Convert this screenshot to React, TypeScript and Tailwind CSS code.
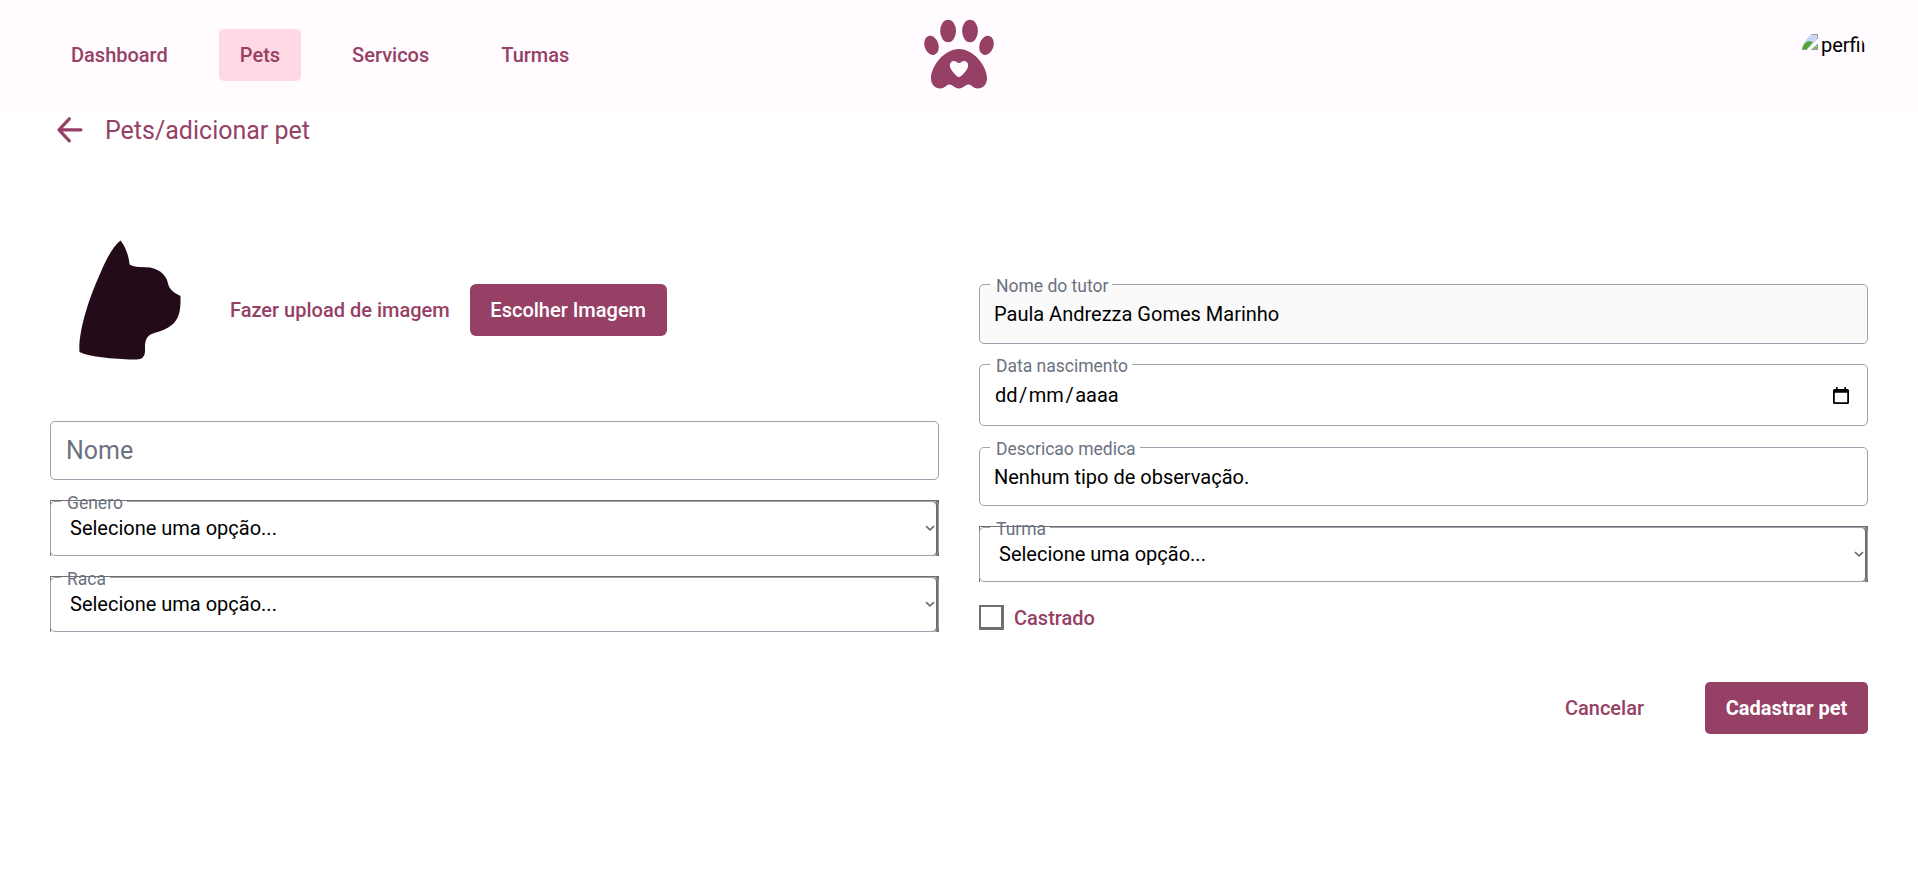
import React from "react";

const navItems = ["Dashboard", "Pets", "Servicos", "Turmas"];

function Paw() {
  return (
    <svg className="ml-px h-[76px] w-[80px]" viewBox="0 0 80 76" fill="#964066">
      <ellipse cx="28.1" cy="14" rx="7.9" ry="11.2" />
      <ellipse cx="50" cy="14" rx="7.9" ry="11.2" />
      <ellipse cx="11.5" cy="28.4" rx="7" ry="9.8" transform="rotate(-18 11.5 28.4)" />
      <ellipse cx="66.5" cy="28.4" rx="7" ry="9.8" transform="rotate(18 66.5 28.4)" />
      <path
        fillRule="evenodd"
        d="M39 32C24 32 11 49.500 11 61.200C11 67.500 15 71.400 20.500 71.400C25.500 71.400 26 67.600 29.400 67.600C33 67.600 34 71.400 39 71.400C44 71.400 45 67.600 48.600 67.600C52 67.600 52.500 71.400 57.500 71.400C63 71.400 67 67.500 67 61.200C67 49.500 54 32 39 32ZM39 60.200C37 60.200 29.800 52.500 29.800 48.500C29.800 45.500 31.700 43.900 34 43.900C36.200 43.900 37 46 39 46C41 46 41.800 43.900 44 43.900C46.300 43.900 48.200 45.500 48.200 48.500C48.200 52.500 41 60.200 39 60.200Z"
      />
    </svg>
  );
}

function Header() {
  return (
    <header className="grid h-[110px] grid-cols-[1fr_80px_1fr] items-center bg-[#fffbff] px-[50px]">
      <nav className="flex gap-[30px]">
        {navItems.map((item) => (
          <a
            key={item}
            className={
              item === "Pets"
                ? "flex h-[52px] items-center rounded-[5px] bg-[#ffd9e3] px-[21px]"
                : "flex h-[52px] items-center px-[21px]"
            }
          >
            {item}
          </a>
        ))}
      </nav>
      <Paw />
      <div className="mt-[25px] flex size-[68px] items-start self-start justify-self-end pt-[7px] pl-[2px] [clip-path:circle(50%)]">
        <BrokenImage />
        <span className="ml-[3px] text-[20px] leading-[26px] font-normal text-black">perfil</span>
      </div>
    </header>
  );
}

function BrokenImage() {
  return (
    <svg className="mt-[2px] size-4 shrink-0" viewBox="0 0 16 16">
      <path d="M0 0h16v16H0z" fill="#c6d7f7" />
      <path d="M0 15.500C2 8 6 6 11 8L5 16H0z" fill="#52a535" />
      <path d="M8 16l8-6v6z" fill="#7db865" />
      <path d="M4 16L16 5v4L8.500 16z" fill="#fff" />
      <path d="M10 .5h5.500V5M15.500 10v6M0 15.500h5M9 15.500h7" fill="none" stroke="#9a9a9a" />
    </svg>
  );
}

function Cat() {
  return (
    <svg className="h-[120px] w-[102px]" viewBox="0 0 102 120" fill="#230b1a">
      <path d="M41.500 .5C46.500 6 50 17 50.500 24Q51.500 27 67 27.200C78 27.200 87.500 34 89 43.500C90 49 95 53 101.500 56C102 76 98.500 84 83 90.500C76 93.500 66.500 92.500 66 106V112Q65.500 119.500 57.500 119.500C40 119.500 12 117.500 .5 112C-1 95 8 64 17.500 42C25 24.500 31.500 8.500 41.500 .5Z" />
    </svg>
  );
}

const legend = "h-0 pl-[6px] pr-[4px] text-[17.5px] leading-[2px] font-normal text-[#6b7280]";

function Field({
  label,
  className,
  children,
}: {
  label: string;
  className: string;
  children: React.ReactNode;
}) {
  return (
    <div className={className}>
      <fieldset className="h-full min-w-0 rounded-[5px] border border-[#9ca3af] px-[10px]">
        <legend className={legend}>{label}</legend>
        <div className="flex h-full items-center justify-between px-[4px] text-[20px] font-normal text-black">
          {children}
        </div>
      </fieldset>
    </div>
  );
}

function SelectField({ label }: { label: string }) {
  return (
    <div className="h-[56px] border-t border-[#6f6f70] bg-[linear-gradient(#6f6f70,#6f6f70),linear-gradient(#6f6f70,#6f6f70),linear-gradient(#6f6f70,#6f6f70)] bg-[length:1px_4px,1px_4px,3px_100%] bg-[position:left_top,left_bottom,right_top] bg-no-repeat">
      <fieldset className="h-[55px] min-w-0 rounded-[5px] border border-[#9ca3af] px-[10px] shadow-[inset_-2px_0_#6f6f70]">
        <legend className={legend}>{label}</legend>
        <div className="flex h-[52px] items-center justify-between pl-[9px] text-[20px] font-normal text-black">
          <span>Selecione uma opção...</span>
          <svg className="-mr-[7px] size-[10px]" viewBox="0 0 10 10" fill="none" stroke="#6b6b6b" strokeWidth="1.600">
            <path d="M1 3.200l4 3.600 4-3.600" />
          </svg>
        </div>
      </fieldset>
    </div>
  );
}

export default function App() {
  return (
    <div className="min-h-[873px] bg-white font-['Roboto',sans-serif] text-[20px] leading-[30px] font-medium text-[#964066]">
      <Header />
      <div className="flex h-[40px] items-center pl-[57px]">
        <svg className="size-[26px]" viewBox="0 0 26 26" fill="none" stroke="#964066" strokeWidth="3.200" strokeLinecap="round" strokeLinejoin="round">
          <path d="M24 12.800H2M12.300 1.800L2 12.800l10.300 11" />
        </svg>
        <h1 className="mt-[2px] ml-[22px] text-[25px] font-normal">Pets/adicionar pet</h1>
      </div>
      <main className="grid grid-cols-2 gap-x-[40px] px-[50px]">
        <section className="flex flex-col pt-[90px]">
          <div className="flex h-[181px] items-start pl-[29px]">
            <Cat />
            <div className="mt-[44px] ml-[49px] flex items-center gap-[20px]">
              <span>Fazer upload de imagem</span>
              <button className="h-[52px] w-[197px] rounded-[6px] bg-[#964066] text-white">Escolher Imagem</button>
            </div>
          </div>
          <div className="flex h-[59px] items-center rounded-[5px] border border-[#9ca3af] px-[15px] text-[25px] font-normal text-[#6b7280]">
            Nome
          </div>
          <div className="mt-[20px] flex flex-col gap-[20px]">
            <SelectField label="Genero" />
            <SelectField label="Raca" />
          </div>
        </section>
        <section className="flex flex-col pt-[134px]">
          <Field label="Nome do tutor" className="h-[60px] rounded-[5px] bg-[#fafafa]">
            <span>Paula Andrezza Gomes Marinho</span>
          </Field>
          <Field label="Data nascimento" className="mt-[20px] h-[62px]">
            <div className="flex gap-[0.5px]">
              <span className="px-px">dd</span>
              <span>/</span>
              <span className="px-px">mm</span>
              <span>/</span>
              <span className="px-px">aaaa</span>
            </div>
            <svg className="mr-[4px] h-[17px] w-[16px]" viewBox="0 0 16 17">
              <path d="M3 0h1.600v2h6.800V0H13v2h1.500Q16 2 16 3.500v12Q16 17 14.500 17h-13Q0 17 0 15.500v-12Q0 2 1.500 2H3zM1.800 5.800v9.500h12.400V5.800z" fill="#000" fillRule="evenodd" />
            </svg>
          </Field>
          <Field label="Descricao medica" className="mt-[21px] h-[59px]">
            <span>Nenhum tipo de observação.</span>
          </Field>
          <div className="mt-[20px]">
            <SelectField label="Turma" />
          </div>
          <label className="mt-[23px] flex h-[25px] items-center gap-[10px]">
            <span className="size-[25px] border-2 border-r-3 border-b-3 border-[#6f6f70]" />
            Castrado
          </label>
          <div className="mt-[52px] flex justify-end gap-[40px]">
            <button className="h-[52px] px-[21px]">Cancelar</button>
            <button className="h-[52px] w-[163px] rounded-[5px] bg-[#964066] font-bold text-white">Cadastrar pet</button>
          </div>
        </section>
      </main>
    </div>
  );
}
